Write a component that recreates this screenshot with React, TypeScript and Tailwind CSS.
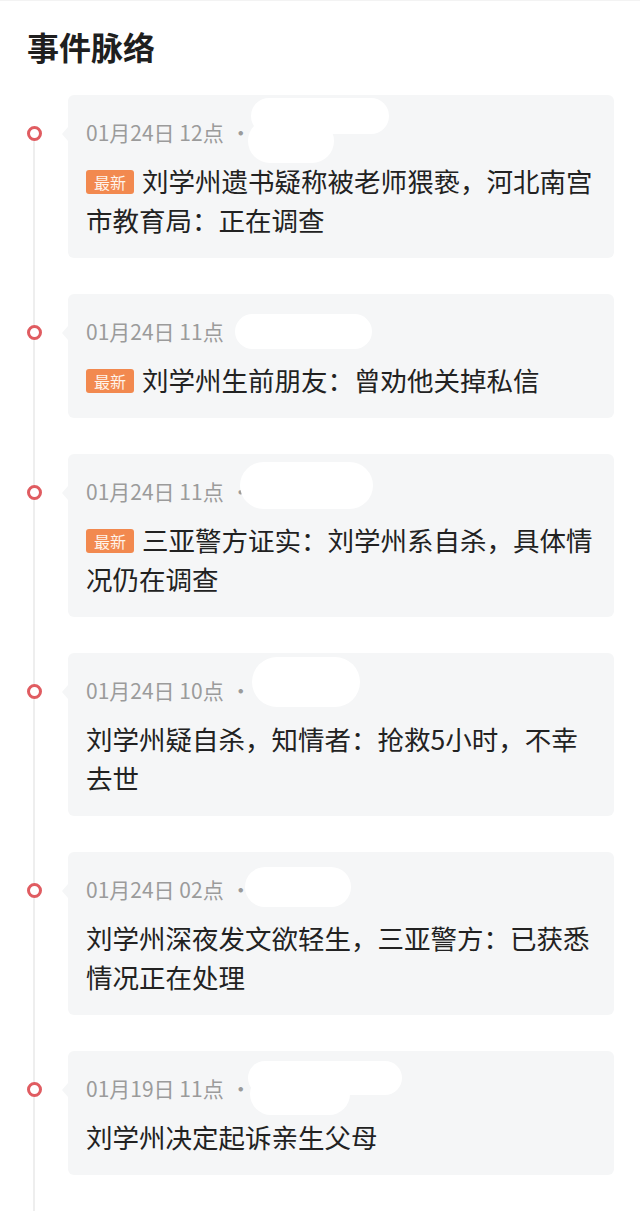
type Blob = { left: number; top: number; w: number; h: number }

type Event = {
  time: string
  title: string
  latest?: boolean
  blobs: Blob[]
}

const events: Event[] = [
  {
    time: '01月24日 12点',
    title: '刘学州遗书疑称被老师猥亵，河北南宫市教育局：正在调查',
    latest: true,
    blobs: [
      { left: 183, top: 3, w: 138, h: 36 },
      { left: 180, top: 24, w: 86, h: 44 },
    ],
  },
  {
    time: '01月24日 11点',
    title: '刘学州生前朋友：曾劝他关掉私信',
    latest: true,
    blobs: [{ left: 167, top: 20, w: 137, h: 35 }],
  },
  {
    time: '01月24日 11点',
    title: '三亚警方证实：刘学州系自杀，具体情况仍在调查',
    latest: true,
    blobs: [{ left: 172, top: 8, w: 133, h: 47 }],
  },
  {
    time: '01月24日 10点',
    title: '刘学州疑自杀，知情者：抢救5小时，不幸去世',
    blobs: [{ left: 184, top: 4, w: 108, h: 50 }],
  },
  {
    time: '01月24日 02点',
    title: '刘学州深夜发文欲轻生，三亚警方：已获悉情况正在处理',
    blobs: [{ left: 177, top: 15, w: 106, h: 40 }],
  },
  {
    time: '01月19日 11点',
    title: '刘学州决定起诉亲生父母',
    blobs: [
      { left: 180, top: 10, w: 154, h: 34 },
      { left: 182, top: 22, w: 100, h: 42 },
    ],
  },
]

function EventCard({ item }: { item: Event }) {
  return (
    <div className="flex mb-[36px]">
      <div className="w-[68px] shrink-0 flex justify-center">
        <span className="relative z-10 mt-[31px] w-[15px] h-[15px] rounded-full border-[3px] border-[#e05c61] bg-white" />
      </div>
      <div className="relative flex-1 mr-[26px] rounded-[6px] bg-[#f5f6f7] pt-[25px] pb-[19px] px-[18px]">
        <span className="absolute left-[-6px] top-[32px] w-0 h-0 border-y-[7px] border-y-transparent border-r-[6px] border-r-[#f5f6f7]" />
        <div className="text-[21px] leading-[24px] text-[#9b9b9b]">
          {item.time} <span className="mx-[2px]">·</span>
        </div>
        {item.blobs.map((b, i) => (
          <span
            key={i}
            className="absolute rounded-full bg-white"
            style={{ left: b.left, top: b.top, width: b.w, height: b.h }}
          />
        ))}
        <p className="mt-[17px] text-[26.5px] leading-[39px] text-[#222]">
          {item.latest && (
            <span className="inline-block align-[3px] w-[48px] h-[24px] mr-[8px] rounded-[3px] bg-[#f2894f] text-center text-[16px] leading-[24px] text-[#fff3ea]">
              最新
            </span>
          )}
          {item.title}
        </p>
      </div>
    </div>
  )
}

export default function App() {
  return (
    <div
      className="w-[640px] h-[1211px] overflow-hidden bg-white flex flex-col"
      style={{ fontFamily: '"Noto Sans CJK SC", "Noto Sans", sans-serif' }}
    >
      <div className="h-[2px] bg-[#f3f3f3]" />
      <h1 className="pl-[27px] pt-[25px] text-[32px] leading-[40px] font-bold text-[#1f1f1f]">事件脉络</h1>
      <div className="relative flex-1 pt-[29px]">
        <div className="absolute left-[33px] top-[67px] bottom-0 w-[2px] bg-[#eeeeee]" />
        {events.map((item, i) => (
          <EventCard key={i} item={item} />
        ))}
      </div>
    </div>
  )
}
